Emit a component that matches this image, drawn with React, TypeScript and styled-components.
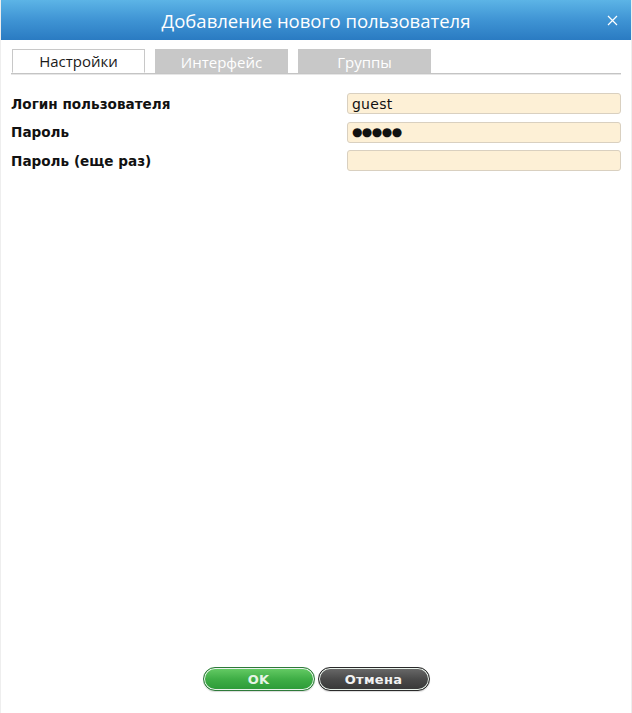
import styled, { createGlobalStyle } from 'styled-components';

const GlobalStyle = createGlobalStyle`
  html, body {
    margin: 0;
    padding: 0;
    height: 100%;
    background: #fff;
  }
  #root {
    height: 100%;
  }
`;

const Window = styled.div`
  height: 100vh;
  display: flex;
  flex-direction: column;
  box-sizing: border-box;
  border-left: 1px solid #eeeeee;
  border-right: 1px solid #eeeeee;
  background: #fff;
`;

const TitleBar = styled.div`
  position: relative;
  height: 40px;
  flex-shrink: 0;
  display: flex;
  align-items: center;
  justify-content: center;
  background: linear-gradient(to bottom, #5cb4e6 0%, #3f94d4 50%, #2a7bc2 100%);
  color: #fff;
  font-family: "Open Sans", "Liberation Sans", sans-serif;
  font-size: 18.5px;
  font-weight: 400;
`;

const CloseButton = styled.button`
  position: absolute;
  right: 12px;
  top: 13px;
  width: 14px;
  height: 14px;
  padding: 0;
  border: 0;
  background: transparent;
  cursor: pointer;
  display: flex;
  align-items: center;
  justify-content: center;
`;

const TabStrip = styled.div`
  display: flex;
  gap: 10px;
  margin: 9px 10px 0 10px;
  padding-left: 1px;
  border-bottom: 1px solid #c4c4c4;
  box-shadow: 0 1px 0 #e6e6e6;
`;

const Tab = styled.div<{ $active?: boolean }>`
  width: 133px;
  height: 24px;
  box-sizing: border-box;
  display: flex;
  align-items: center;
  justify-content: center;
  font-family: "Open Sans", "Liberation Sans", sans-serif;
  font-size: 15px;
  color: ${(p) => (p.$active ? '#1a1a1a' : '#ffffff')};
  background: ${(p) => (p.$active ? '#ffffff' : '#c8c8c8')};
  border: 1px solid #c8c8c8;
  border-bottom: ${(p) => (p.$active ? '1px solid #ffffff' : '0')};
  margin-bottom: ${(p) => (p.$active ? '-1px' : '0')};
`;

const Form = styled.div`
  display: flex;
  flex-direction: column;
  gap: 7.5px;
  padding: 19px 10px 0 10px;
`;

const Row = styled.div`
  display: flex;
  align-items: center;
  height: 21px;
`;

const Label = styled.label`
  width: 337px;
  font-family: "DejaVu Sans", Verdana, sans-serif;
  font-size: 13.6px;
  font-weight: bold;
  color: #111;
`;

const Field = styled.input<{ $mask?: boolean }>`
  width: 275px;
  height: 21px;
  box-sizing: border-box;
  padding: 0 4px;
  border: 1px solid #d9d0c0;
  border-radius: 3px;
  background: #fdf0d6;
  font-family: "DejaVu Sans", Verdana, sans-serif;
  font-size: ${(p) => (p.$mask ? '12px' : '14px')};
  letter-spacing: ${(p) => (p.$mask ? '-0.5px' : '0.3px')};
  color: #111;
  outline: none;
`;

const Spacer = styled.div`
  flex: 1;
`;

const Footer = styled.div`
  display: flex;
  justify-content: center;
  gap: 3px;
  padding-bottom: 22px;
`;

const Button = styled.button<{ $variant: 'ok' | 'cancel' }>`
  width: 112px;
  height: 24px;
  border-radius: 12px;
  box-sizing: border-box;
  padding: 0;
  cursor: pointer;
  font-family: Verdana, "DejaVu Sans", sans-serif;
  font-size: 13px;
  font-weight: bold;
  letter-spacing: 0.3px;
  border: 1px solid ${(p) => (p.$variant === 'ok' ? '#2e7a3a' : '#2a2a2a')};
  box-shadow: inset 0 0 0 1px #eaf3ec, 0 1px 1px rgba(0, 0, 0, 0.15);
  color: ${(p) => (p.$variant === 'ok' ? '#e6f4e6' : '#f2f2f2')};
  background: ${(p) =>
    p.$variant === 'ok'
      ? 'linear-gradient(to bottom, #66cc66 0%, #3fae46 50%, #2c9a38 100%)'
      : 'linear-gradient(to bottom, #6a6a6a 0%, #4a4a4a 50%, #383838 100%)'};
`;

export default function App() {
  return (
    <>
      <GlobalStyle />
      <Window>
        <TitleBar>
          Добавление нового пользователя
          <CloseButton aria-label="Закрыть">
            <svg width="11" height="11" viewBox="0 0 11 11">
              <path d="M1 1 L10 10 M10 1 L1 10" stroke="#ffffff" strokeWidth="1.2" fill="none" />
            </svg>
          </CloseButton>
        </TitleBar>
        <TabStrip>
          <Tab $active>Настройки</Tab>
          <Tab>Интерфейс</Tab>
          <Tab>Группы</Tab>
        </TabStrip>
        <Form>
          <Row>
            <Label>Логин пользователя</Label>
            <Field type="text" defaultValue="guest" />
          </Row>
          <Row>
            <Label>Пароль</Label>
            <Field type="text" $mask readOnly value="●●●●●" />
          </Row>
          <Row>
            <Label>Пароль (еще раз)</Label>
            <Field type="password" defaultValue="" />
          </Row>
        </Form>
        <Spacer />
        <Footer>
          <Button $variant="ok">OK</Button>
          <Button $variant="cancel">Отмена</Button>
        </Footer>
      </Window>
    </>
  );
}
